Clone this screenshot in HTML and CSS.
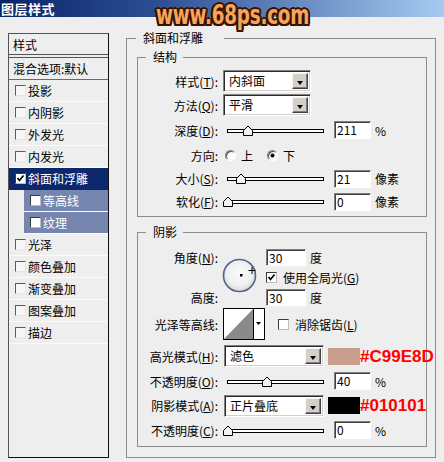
FILE: index.html
```html
<!DOCTYPE html>
<html lang="zh-CN">
<head>
<meta charset="utf-8">
<title>图层样式</title>
<link rel="stylesheet" href="styles.css">
</head>
<body>
<div class="dialog">
  <div class="titlebar">图层样式</div>
  <div class="watermark">www.68ps.com</div>
  <div class="main">
    <div class="stylelist">
      <div class="item head">样式</div>
      <div class="item blend">混合选项:默认</div>
      <div class="item"><span class="cb"></span>投影</div>
      <div class="item"><span class="cb"></span>内阴影</div>
      <div class="item"><span class="cb"></span>外发光</div>
      <div class="item"><span class="cb"></span>内发光</div>
      <div class="item sel"><span class="cb white"><svg viewBox="0 0 9 9" width="9" height="9"><path d="M1.5 4 L3.5 6.5 L7.5 1.5" fill="none" stroke="#000" stroke-width="1.7"/></svg></span>斜面和浮雕</div>
      <div class="item sub"><span class="cb white"></span>等高线</div>
      <div class="item sub"><span class="cb white"></span>纹理</div>
      <div class="item"><span class="cb"></span>光泽</div>
      <div class="item"><span class="cb"></span>颜色叠加</div>
      <div class="item"><span class="cb"></span>渐变叠加</div>
      <div class="item"><span class="cb"></span>图案叠加</div>
      <div class="item"><span class="cb"></span>描边</div>
    </div>

    <fieldset class="group outer">
      <legend class="lg-outer">斜面和浮雕</legend>

      <fieldset class="group inner struct">
        <legend class="lg-inner">结构</legend>
        <div class="row h24"><span class="lbl">样式(<u>T</u>):</span><div class="select s-struct"><span class="val">内斜面</span><span class="drop"></span></div></div>
        <div class="row h24"><span class="lbl">方法(<u>Q</u>):</span><div class="select s-struct"><span class="val">平滑</span><span class="drop"></span></div></div>
        <div class="row h26"><span class="lbl">深度(<u>D</u>):</span>
          <svg class="slider" width="104" height="11" viewBox="0 0 104 11"><rect x="4.5" y="4.5" width="96" height="3" fill="#fff" stroke="#000"/><path d="M20.5 10.5 V5.5 L25 1 L29.5 5.5 V10.5 Z" fill="#f2f2f2" stroke="#000"/></svg>
          <span class="num">211</span><span class="unit">%</span></div>
        <div class="row h24"><span class="lbl">方向:</span><span class="radio"></span><span class="rlabel">上</span><span class="radio on"></span><span class="rlabel">下</span></div>
        <div class="row h23"><span class="lbl">大小(<u>S</u>):</span>
          <svg class="slider" width="104" height="11" viewBox="0 0 104 11"><rect x="4.5" y="4.5" width="96" height="3" fill="#fff" stroke="#000"/><path d="M13.5 10.5 V5.5 L18 1 L22.5 5.5 V10.5 Z" fill="#f2f2f2" stroke="#000"/></svg>
          <span class="num">21</span><span class="unit">像素</span></div>
        <div class="row h23"><span class="lbl">软化(<u>F</u>):</span>
          <svg class="slider" width="104" height="11" viewBox="0 0 104 11"><rect x="4.5" y="4.5" width="96" height="3" fill="#fff" stroke="#000"/><path d="M0.5 10.5 V5.5 L5 1 L9.5 5.5 V10.5 Z" fill="#f2f2f2" stroke="#000"/></svg>
          <span class="num">0</span><span class="unit">像素</span></div>
      </fieldset>

      <fieldset class="group inner shade">
        <legend class="lg-inner">阴影</legend>
        <div class="angle">
          <span class="lbl a-l1">角度(<u>N</u>):</span>
          <svg class="dial" width="35" height="35" viewBox="0 0 35 35">
            <defs><radialGradient id="dg" cx="50%" cy="45%" r="55%"><stop offset="0" stop-color="#fbfbfb"/><stop offset="0.7" stop-color="#efefef"/><stop offset="1" stop-color="#d8d8d8"/></radialGradient></defs>
            <circle cx="17.5" cy="17.5" r="16" fill="url(#dg)" stroke="#52628f" stroke-width="1.6"/>
            <rect x="18" y="16" width="2.5" height="2.5" fill="#000"/>
            <path d="M26.5 12.5 H33.5 M30 9 V16" stroke="#000" stroke-width="1"/>
          </svg>
          <div class="a-r1"><span class="num wide">30</span><span class="unit">度</span></div>
          <div class="a-r2"><span class="cb white box2"><svg viewBox="0 0 9 9" width="9" height="9"><path d="M1.5 4 L3.5 6.5 L7.5 1.5" fill="none" stroke="#000" stroke-width="1.7"/></svg></span><span>使用全局光(<u>G</u>)</span></div>
          <span class="lbl a-l3">高度:</span>
          <div class="a-r3"><span class="num wide">30</span><span class="unit">度</span></div>
        </div>
        <div class="row h34"><span class="lbl">光泽等高线:</span>
          <svg class="contour" width="42" height="32" viewBox="0 0 42 32">
            <rect x="0.5" y="0.5" width="41" height="31" fill="#fff" stroke="#000"/>
            <polygon points="1,31 30,1 30,31" fill="#8a8a8a"/>
            <line x1="30.5" y1="0" x2="30.5" y2="32" stroke="#000"/>
            <polygon points="33,14 38,14 35.5,17" fill="#000"/>
          </svg>
          <span class="cb white box3"></span><span>消除锯齿(<u>L</u>)</span></div>
        <div class="row h26 mt2"><span class="lbl">高光模式(<u>H</u>):</span><div class="select s-mode"><span class="val">滤色</span><span class="drop"></span></div><span class="swatch sw-hi"></span><span class="hex">#C99E8D</span></div>
        <div class="row h24"><span class="lbl">不透明度(<u>O</u>):</span>
          <svg class="slider" width="104" height="11" viewBox="0 0 104 11"><rect x="4.5" y="4.5" width="96" height="3" fill="#fff" stroke="#000"/><path d="M39.5 10.5 V5.5 L44 1 L48.5 5.5 V10.5 Z" fill="#f2f2f2" stroke="#000"/></svg>
          <span class="num">40</span><span class="unit">%</span></div>
        <div class="row h25"><span class="lbl">阴影模式(<u>A</u>):</span><div class="select s-mode"><span class="val">正片叠底</span><span class="drop"></span></div><span class="swatch sw-sh"></span><span class="hex">#010101</span></div>
        <div class="row h24"><span class="lbl">不透明度(<u>C</u>):</span>
          <svg class="slider" width="104" height="11" viewBox="0 0 104 11"><rect x="4.5" y="4.5" width="96" height="3" fill="#fff" stroke="#000"/><path d="M0.5 10.5 V5.5 L5 1 L9.5 5.5 V10.5 Z" fill="#f2f2f2" stroke="#000"/></svg>
          <span class="num">0</span><span class="unit">%</span></div>
      </fieldset>
    </fieldset>
  </div>
</div>
</body>
</html>
```
FILE: styles.css
```css
* { box-sizing: border-box; }
html, body { margin: 0; padding: 0; }
body {
  width: 444px;
  height: 462px;
  overflow: hidden;
  background: #eeeeee;
  font-family: "Noto Sans CJK SC", "Liberation Sans", sans-serif;
  font-size: 12px;
  color: #000;
}
.dialog { position: relative; width: 444px; height: 462px; }

.titlebar {
  height: 17px;
  padding-left: 1px;
  background: linear-gradient(to right, #0a246a 0%, #2c4d92 35%, #a6caf0 100%);
  color: #fff;
  font-weight: bold;
  font-size: 13px;
  line-height: 17px;
  letter-spacing: 0.5px;
}

.watermark {
  position: absolute;
  left: 156px;
  top: 3px;
  font-family: "DejaVu Sans", sans-serif;
  font-weight: bold;
  font-size: 26px;
  line-height: 25px;
  letter-spacing: -0.3px;
  color: #f7a55c;
  transform: scaleX(0.705);
  transform-origin: 0 0;
  white-space: nowrap;
  text-shadow:
    -3px 0 #3a1300, 3px 0 #3a1300, 0 -2px #3a1300, 0 2px #3a1300,
    -2.5px -1.5px #3a1300, 2.5px -1.5px #3a1300, -2.5px 1.5px #3a1300, 2.5px 1.5px #3a1300;
}

.main {
  display: flex;
  align-items: flex-start;
  padding: 14px 0 0 8px;
}

/* left style list */
.stylelist {
  width: 101px;
  height: 425px;
  margin-top: 2px;
  border: 1px solid #111;
  border-left-color: #555;
  border-top-color: #555;
}
.item {
  height: 22px;
  display: flex;
  align-items: center;
  padding-left: 6px;
  border-bottom: 1px solid #fbfbfb;
  white-space: nowrap;
}
.item.head {
  height: 24px;
  padding-left: 4px;
  border-bottom: 4px double #555;
}
.item.blend {
  height: 22px;
  padding-left: 4px;
  border-bottom: 1px solid #6a6a6a;
}
.item.sel { background: #0c286c; color: #fff; border-bottom-color: #0c286c; }
.item.sub { margin-left: 15px; background: #7585ad; color: #fff; }

.cb {
  display: inline-flex;
  align-items: center;
  justify-content: center;
  flex: none;
  width: 11px;
  height: 11px;
  margin-right: 2px;
  border: 1px solid;
  border-color: #5a5a5a #e6e6e6 #e6e6e6 #5a5a5a;
  background: #f7f7f7;
}
.cb.white { background: #fff; border-color: #3a3a3a #bdbdbd #bdbdbd #3a3a3a; }
.cb svg { display: block; }
.cb.box2 { margin-right: 6px; }
.cb.box3 { margin-left: 13px; margin-right: 6px; }

/* group boxes */
fieldset.group {
  margin: 0;
  min-width: 0;
  border: 1px solid #8d8d8d;
}
fieldset.group > legend {
  font-size: 12px;
  line-height: 14px;
}
.outer {
  width: 310px;
  margin-left: 17px !important;
  padding: 5px 8px 10px 10px;
}
.lg-outer { padding: 0 21px 0 7px; margin-left: -1px; }
.inner { width: 290px; padding: 5px 0 3px 0; }
.lg-inner { padding: 0 6px 0 7px; margin-left: 8px; }
.shade { margin-top: 8px !important; padding: 9px 0 4px 0; }

.row { display: flex; align-items: center; white-space: nowrap; }
.h23 { height: 23px; }
.h24 { height: 24px; }
.h25 { height: 25px; }
.h26 { height: 26px; }
.h34 { height: 34px; }
.mt2 { margin-top: 2px; }

.lbl {
  flex: none;
  width: 80px;
  text-align: right;
  white-space: nowrap;
}

.select {
  display: flex;
  flex: none;
  height: 22px;
  margin-left: 5px;
  border: 1px solid;
  border-color: #808080 #fff #fff #808080;
  box-shadow: inset 1px 1px 0 #2a2a2a, inset -1px -1px 0 #d4d0c8;
  background: #fff;
  padding: 2px;
}
.s-struct { width: 88px; }
.s-mode { width: 100px; margin-left: 6px; }
.select .val { flex: 1; padding-left: 3px; line-height: 16px; }
.select .drop {
  position: relative;
  flex: none;
  width: 16px;
  background: #d4d0c8;
  border: 1px solid;
  border-color: #f4f4f4 #404040 #404040 #f4f4f4;
  box-shadow: inset -1px -1px 0 #808080;
}
.select .drop::after {
  content: "";
  position: absolute;
  left: 4px;
  top: 7px;
  border-left: 3.5px solid transparent;
  border-right: 3.5px solid transparent;
  border-top: 4px solid #000;
}

.slider { flex: none; display: block; margin-left: 5px; }

.num {
  display: inline-block;
  flex: none;
  width: 37px;
  height: 18px;
  margin-left: 7px;
  padding-left: 2px;
  background: #fff;
  border: 1px solid;
  border-color: #808080 #fff #fff #808080;
  box-shadow: inset 1px 1px 0 #404040;
  line-height: 16px;
}
.num.wide { width: 40px; height: 17px; margin-left: 0; line-height: 15px; }
.unit { margin-left: 4px; }

.radio {
  position: relative;
  flex: none;
  width: 11px;
  height: 11px;
  margin-left: 7px;
  border-radius: 50%;
  border: 1px solid;
  border-color: #808080 #fff #fff #808080;
  box-shadow: inset 1px 1px 0 #505050;
  background: #fafafa;
}
.radio + .rlabel { margin-left: 5px; }
.rlabel + .radio { margin-left: 14px; }
.radio.on::after {
  content: "";
  position: absolute;
  left: 3px;
  top: 3px;
  width: 3px;
  height: 3px;
  border-radius: 50%;
  background: #000;
  box-shadow: 0 0 0 0.5px #000;
}

/* angle block */
.angle {
  display: grid;
  grid-template-columns: 80px 48px 1fr;
  grid-template-rows: 19px 20px 20px;
  align-items: center;
}
.a-l1 { grid-column: 1; grid-row: 1; }
.a-l3 { grid-column: 1; grid-row: 3; }
.dial { grid-column: 2; grid-row: 1 / 4; align-self: start; margin: 10px 0 0 4px; display: block; }
.a-r1, .a-r2, .a-r3 { grid-column: 3; display: flex; align-items: center; }
.a-r1 { grid-row: 1; }
.a-r2 { grid-row: 2; }
.a-r3 { grid-row: 3; }

.contour { flex: none; display: block; margin-left: 5px; }

.swatch { flex: none; width: 32px; height: 17px; margin-left: 4px; }
.sw-hi { background: #c99e8d; }
.sw-sh { background: #010101; }
.hex {
  color: #ff0000;
  font-family: "Liberation Sans", Arial, sans-serif;
  font-weight: bold;
  font-size: 17px;
  line-height: 17px;
}
u { text-decoration: underline; text-underline-offset: 1px; }
```
